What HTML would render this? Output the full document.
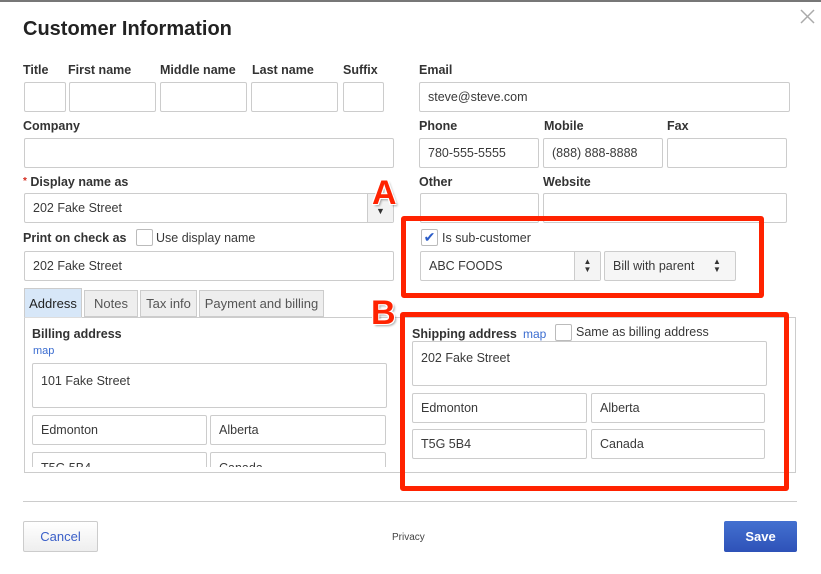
<!DOCTYPE html>
<html><head><meta charset="utf-8"><style>
*{box-sizing:border-box;margin:0;padding:0}
body{width:821px;height:574px;background:#fff;position:relative;overflow:hidden;font-family:"Liberation Sans",Arial,sans-serif;color:#333}
.a{position:absolute}
.l{position:absolute;font-size:12.5px;font-weight:bold;color:#333;line-height:14px}
.t{position:absolute;font-size:12.5px;color:#393939;line-height:14px}
.i{position:absolute;border:1px solid #ccc;border-radius:2px;background:#fff;font-size:12.5px;color:#393939;padding-left:8px;display:flex;align-items:center}
.cb{position:absolute;width:17px;height:17px;border:1px solid #bbb;border-radius:2px;background:#fff}
.tab{position:absolute;top:290px;height:27px;border:1px solid #ccc;background:#eee;font-size:13px;color:#555;display:flex;align-items:center;justify-content:center}
.red{position:absolute;border:5px solid #ff2200;border-radius:3px}
.big{position:absolute;font-size:34px;font-weight:bold;color:#ff2200;line-height:30px;text-shadow:-1px -1px 0 #fff,1px -1px 0 #fff,-1px 1px 0 #fff,1px 1px 0 #fff,2px 2px 2px rgba(0,0,0,.35)}
</style></head><body>
<div class="a" style="left:0;top:0;width:821px;height:2px;background:#777"></div>
<div class="a" style="left:23px;top:18px;font-size:20px;font-weight:bold;color:#222">Customer Information</div>
<svg class="a" style="left:800px;top:9px" width="15" height="15"><path d="M1 1L14 14M14 1L1 14" stroke="#aaa" stroke-width="1.5"/></svg>

<div class="l" style="left:23px;top:63px">Title</div>
<div class="l" style="left:68px;top:63px">First name</div>
<div class="l" style="left:160px;top:63px">Middle name</div>
<div class="l" style="left:252px;top:63px">Last name</div>
<div class="l" style="left:343px;top:63px">Suffix</div>
<div class="l" style="left:419px;top:63px">Email</div>
<div class="i" style="left:24px;top:82px;width:42px;height:30px"></div>
<div class="i" style="left:69px;top:82px;width:87px;height:30px"></div>
<div class="i" style="left:160px;top:82px;width:87px;height:30px"></div>
<div class="i" style="left:251px;top:82px;width:87px;height:30px"></div>
<div class="i" style="left:343px;top:82px;width:41px;height:30px"></div>
<div class="i" style="left:419px;top:82px;width:371px;height:30px">steve@steve.com</div>

<div class="l" style="left:23px;top:119px">Company</div>
<div class="l" style="left:419px;top:119px">Phone</div>
<div class="l" style="left:544px;top:119px">Mobile</div>
<div class="l" style="left:667px;top:119px">Fax</div>
<div class="i" style="left:24px;top:138px;width:370px;height:30px"></div>
<div class="i" style="left:419px;top:138px;width:120px;height:30px">780-555-5555</div>
<div class="i" style="left:543px;top:138px;width:120px;height:30px">(888) 888-8888</div>
<div class="i" style="left:667px;top:138px;width:120px;height:30px"></div>

<div class="l" style="left:23px;top:175px"><span style="color:#d52b1e;font-size:10px;vertical-align:top">*</span> Display name as</div>
<div class="l" style="left:419px;top:175px">Other</div>
<div class="l" style="left:543px;top:175px">Website</div>
<div class="i" style="left:24px;top:193px;width:370px;height:30px">202 Fake Street</div>
<div class="a" style="left:367px;top:194px;width:26px;height:28px;background:#f2f2f2;border-left:1px solid #ccc;font-size:9px;text-align:center;line-height:34px;color:#333">▼</div>
<div class="i" style="left:420px;top:193px;width:119px;height:30px"></div>
<div class="i" style="left:543px;top:193px;width:244px;height:30px"></div>

<div class="l" style="left:23px;top:231px">Print on check as</div>
<div class="cb" style="left:136px;top:229px"></div>
<div class="t" style="left:156px;top:231px">Use display name</div>
<div class="i" style="left:24px;top:251px;width:370px;height:30px">202 Fake Street</div>

<div class="cb" style="left:421px;top:229px;font-size:14px;color:#2b5cc8;line-height:15px;text-align:center">✔</div>
<div class="t" style="left:442px;top:231px">Is sub-customer</div>
<div class="i" style="left:420px;top:251px;width:181px;height:30px">ABC FOODS</div>
<div class="a" style="left:574px;top:252px;width:26px;height:28px;background:#f4f4f4;border-left:1px solid #ccc;font-size:8px;text-align:center;line-height:8px;padding-top:6px;color:#333">▲<br>▼</div>
<div class="i" style="left:604px;top:251px;width:132px;height:30px;background:#f6f6f6">Bill with parent</div>
<div class="a" style="left:713px;top:258px;font-size:8px;line-height:8px;color:#333">▲<br>▼</div>

<div class="tab" style="left:24px;width:58px;height:29px;top:288px;background:#d7e7f8;color:#222;border-bottom:none">Address</div>
<div class="tab" style="left:84px;width:54px">Notes</div>
<div class="tab" style="left:140px;width:57px">Tax info</div>
<div class="tab" style="left:199px;width:125px">Payment and billing</div>
<div class="a" style="left:24px;top:317px;width:772px;height:156px;border:1px solid #ccc;border-top:1px solid #ddd"></div>
<div class="a" style="left:82px;top:317px;width:714px;height:1px;background:#ccc"></div>

<div class="l" style="left:32px;top:327px">Billing address</div>
<div class="a" style="left:33px;top:345px;font-size:11px;color:#3a6cd0">map</div>
<div class="i" style="left:32px;top:363px;width:355px;height:45px;align-items:flex-start;padding-top:10px">101 Fake Street</div>
<div class="i" style="left:32px;top:415px;width:175px;height:30px">Edmonton</div>
<div class="i" style="left:210px;top:415px;width:176px;height:30px">Alberta</div>
<div class="a" style="left:25px;top:452px;width:362px;height:15px;overflow:hidden">
<div class="i" style="left:7px;top:0;width:175px;height:30px;align-items:flex-start;padding-top:8px">T5G 5B4</div>
<div class="i" style="left:185px;top:0;width:176px;height:30px;align-items:flex-start;padding-top:8px">Canada</div></div>
<div class="a" style="left:25px;top:467px;width:770px;height:5px;background:#fff"></div>

<div class="l" style="left:412px;top:327px">Shipping address</div>
<div class="a" style="left:523px;top:327px;font-size:12px;color:#3a6cd0">map</div>
<div class="cb" style="left:555px;top:324px"></div>
<div class="t" style="left:576px;top:325px">Same as billing address</div>
<div class="i" style="left:412px;top:341px;width:355px;height:45px;align-items:flex-start;padding-top:9px">202 Fake Street</div>
<div class="i" style="left:412px;top:393px;width:175px;height:30px">Edmonton</div>
<div class="i" style="left:591px;top:393px;width:174px;height:30px">Alberta</div>
<div class="i" style="left:412px;top:429px;width:175px;height:30px">T5G 5B4</div>
<div class="i" style="left:591px;top:429px;width:174px;height:30px">Canada</div>

<div class="red" style="left:401px;top:216px;width:363px;height:82px"></div>
<div class="red" style="left:400px;top:312px;width:389px;height:179px"></div>
<div class="big" style="left:372px;top:178px">A</div>
<div class="big" style="left:371px;top:298px">B</div>

<div class="a" style="left:23px;top:501px;width:774px;height:1px;background:#ccc"></div>
<div class="a" style="left:23px;top:521px;width:75px;height:31px;border:1px solid #ccc;border-radius:2px;background:linear-gradient(#fff,#eee);color:#3a5fc8;font-size:13px;text-align:center;line-height:29px">Cancel</div>
<div class="a" style="left:392px;top:532px;font-size:10px;color:#444">Privacy</div>
<div class="a" style="left:724px;top:521px;width:73px;height:31px;border-radius:2px;background:linear-gradient(#4370d0,#2e52b8);color:#fff;font-weight:bold;font-size:13px;text-align:center;line-height:31px">Save</div>
</body></html>
